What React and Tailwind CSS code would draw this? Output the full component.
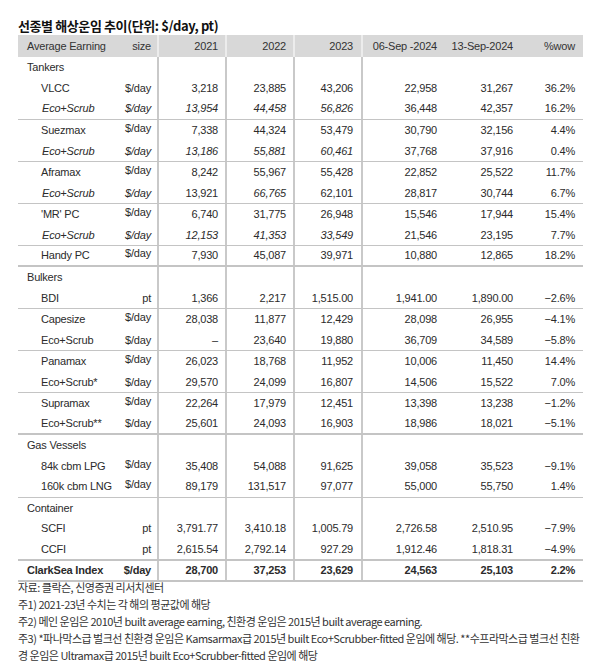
import React from "react";

const FONT = { fontFamily: '"Liberation Sans", Arial, "Noto Sans CJK KR", sans-serif' };

const groups = [
  {
    border: "thin",
    rows: [
      { name: "Tankers", h: true },
      { name: "VLCC", unit: "$/day", v: ["3,218", "23,885", "43,206", "22,958", "31,267", "36.2%"] },
      { name: "Eco+Scrub", unit: "$/day", i: true, it: [0, 1, 2], v: ["13,954", "44,458", "56,826", "36,448", "42,357", "16.2%"] },
    ],
  },
  {
    border: "thin",
    rows: [
      { name: "Suezmax", unit: "$/day", r: true, v: ["7,338", "44,324", "53,479", "30,790", "32,156", "4.4%"] },
      { name: "Eco+Scrub", unit: "$/day", i: true, it: [0, 1, 2], v: ["13,186", "55,881", "60,461", "37,768", "37,916", "0.4%"] },
    ],
  },
  {
    border: "thin",
    rows: [
      { name: "Aframax", unit: "$/day", r: true, v: ["8,242", "55,967", "55,428", "22,852", "25,522", "11.7%"] },
      { name: "Eco+Scrub", unit: "$/day", i: true, it: [1], v: ["13,921", "66,765", "62,101", "28,817", "30,744", "6.7%"] },
    ],
  },
  {
    border: "thin",
    rows: [
      { name: "'MR' PC", unit: "$/day", r: true, v: ["6,740", "31,775", "26,948", "15,546", "17,944", "15.4%"] },
      { name: "Eco+Scrub", unit: "$/day", i: true, it: [0, 1, 2], v: ["12,153", "41,353", "33,549", "21,546", "23,195", "7.7%"] },
    ],
  },
  {
    border: "thick",
    rows: [
      { name: "Handy PC", unit: "$/day", r: true, v: ["7,930", "45,087", "39,971", "10,880", "12,865", "18.2%"] },
    ],
  },
  {
    border: "thin",
    rows: [
      { name: "Bulkers", h: true },
      { name: "BDI", unit: "pt", v: ["1,366", "2,217", "1,515.00", "1,941.00", "1,890.00", "\u22122.6%"] },
    ],
  },
  {
    border: "thin",
    rows: [
      { name: "Capesize", unit: "$/day", r: true, v: ["28,038", "11,877", "12,429", "28,098", "26,955", "\u22124.1%"] },
      { name: "Eco+Scrub", unit: "$/day", v: ["\u2013", "23,640", "19,880", "36,709", "34,589", "\u22125.8%"] },
    ],
  },
  {
    border: "thin",
    rows: [
      { name: "Panamax", unit: "$/day", r: true, v: ["26,023", "18,768", "11,952", "10,006", "11,450", "14.4%"] },
      { name: "Eco+Scrub*", unit: "$/day", v: ["29,570", "24,099", "16,807", "14,506", "15,522", "7.0%"] },
    ],
  },
  {
    border: "thick",
    rows: [
      { name: "Supramax", unit: "$/day", r: true, v: ["22,264", "17,979", "12,451", "13,398", "13,238", "\u22121.2%"] },
      { name: "Eco+Scrub**", unit: "$/day", v: ["25,601", "24,093", "16,903", "18,986", "18,021", "\u22125.1%"] },
    ],
  },
  {
    border: "thin",
    rows: [
      { name: "Gas Vessels", h: true },
      { name: "84k cbm LPG", unit: "$/day", r: true, v: ["35,408", "54,088", "91,625", "39,058", "35,523", "\u22129.1%"] },
      { name: "160k cbm LNG", unit: "$/day", r: true, v: ["89,179", "131,517", "97,077", "55,000", "55,750", "1.4%"] },
    ],
  },
  {
    border: "thick",
    rows: [
      { name: "Container", h: true },
      { name: "SCFI", unit: "pt", v: ["3,791.77", "3,410.18", "1,005.79", "2,726.58", "2,510.95", "\u22127.9%"] },
      { name: "CCFI", unit: "pt", v: ["2,615.54", "2,792.14", "927.29", "1,912.46", "1,818.31", "\u22124.9%"] },
    ],
  },
  {
    border: "thick",
    rows: [
      { name: "ClarkSea Index", unit: "$/day", b: true, top: true, v: ["28,700", "37,253", "23,629", "24,563", "25,103", "2.2%"] },
    ],
  },
];

const colW = ["w-[68px]", "w-[68px]", "w-[68px]", "w-[83px]", "w-[76px]", "w-[63px]"];
const colPad = ["pr-[7px]", "pr-[7px]", "pr-[8px]", "pr-[7px]", "pr-[7px]", "pr-[8px]"];
const vline = [true, true, true, true, false, false];

function Row({ row }) {
  const vals = row.v || ["", "", "", "", "", ""];
  return (
    <div className={`flex h-[21px] ${row.b ? "font-bold" : ""}`}>
      <div className="w-[139px] flex items-center justify-between">
        <span
          className={`${row.h || row.top ? "pl-[9px]" : row.i ? "pl-[24px]" : "pl-[23px]"} ${row.i ? "italic" : ""} whitespace-nowrap`}
        >
          {row.name}
        </span>
        {row.unit && (
          <span className={`pr-[6px] ${row.i ? "italic" : ""} ${row.r ? "-translate-y-[2px]" : ""}`}>
            {row.unit}
          </span>
        )}
      </div>
      {vals.map((val, k) => (
        <div
          key={k}
          className={`${colW[k]} ${colPad[k]} flex items-center justify-end ${vline[k] ? "border-l-2 border-[#c9c9c9]" : ""} ${
            row.it && row.it.includes(k) ? "italic" : ""
          }`}
        >
          {val}
        </div>
      ))}
    </div>
  );
}

export default function App() {
  const headers = ["2021", "2022", "2023", "06-Sep -2024", "13-Sep-2024", "%wow"];
  return (
    <div className="w-[600px] h-[670px] bg-white text-[#2b2b2b] overflow-hidden" style={FONT}>
      <div className="pt-[17px] pl-[18px]">
        <div
          className="h-[18px] leading-[18px] text-[13px] font-bold text-[#111] tracking-[-0.4px] whitespace-nowrap"
          style={{ fontFamily: '"Noto Sans CJK KR", "Liberation Sans", sans-serif' }}
        >
          선종별 해상운임 추이(단위: $/day, pt)
        </div>
        <div className="w-[565px] text-[11px] tracking-[-0.2px]">
          <div className="flex h-[22px] bg-[#d8d8d8] text-[#333]">
            <div className="w-[139px] flex items-center justify-between">
              <span className="pl-[9px]">Average Earning</span>
              <span className="pr-[6px]">size</span>
            </div>
            {headers.map((h, k) => (
              <div
                key={k}
                className={`${colW[k]} ${colPad[k]} flex items-center justify-end ${vline[k] ? "border-l-2 border-[#ececec]" : ""}`}
              >
                {h}
              </div>
            ))}
          </div>
          {groups.map((g, gi) => (
            <div
              key={gi}
              className={`${g.border === "thick" ? "border-b-2" : "border-b"} border-[#c4c4c4] flex flex-col overflow-hidden`}
              style={{ height: g.rows.length * 21 }}
            >
              {g.rows.map((r, ri) => (
                <Row key={ri} row={r} />
              ))}
            </div>
          ))}
        </div>
        <div
          className="mt-[-3px] text-[11px] leading-[17px] text-[#333] tracking-[-0.5px] whitespace-nowrap"
          style={{ fontFamily: '"Noto Sans CJK KR", "Liberation Sans", sans-serif' }}
        >
          <div>자료: 클락슨, 신영증권 리서치센터</div>
          <div>주1) 2021-23년 수치는 각 해의 평균값에 해당</div>
          <div>주2) 메인 운임은 2010년 built average earning, 친환경 운임은 2015년 built average earning.</div>
          <div>
            주3) *파나막스급 벌크선 친환경 운임은 Kamsarmax급 2015년 built Eco+Scrubber-fitted 운임에 해당. **수프라막스급 벌크선 친환
          </div>
          <div>경 운임은 Ultramax급 2015년 built Eco+Scrubber-fitted 운임에 해당</div>
        </div>
      </div>
    </div>
  );
}
